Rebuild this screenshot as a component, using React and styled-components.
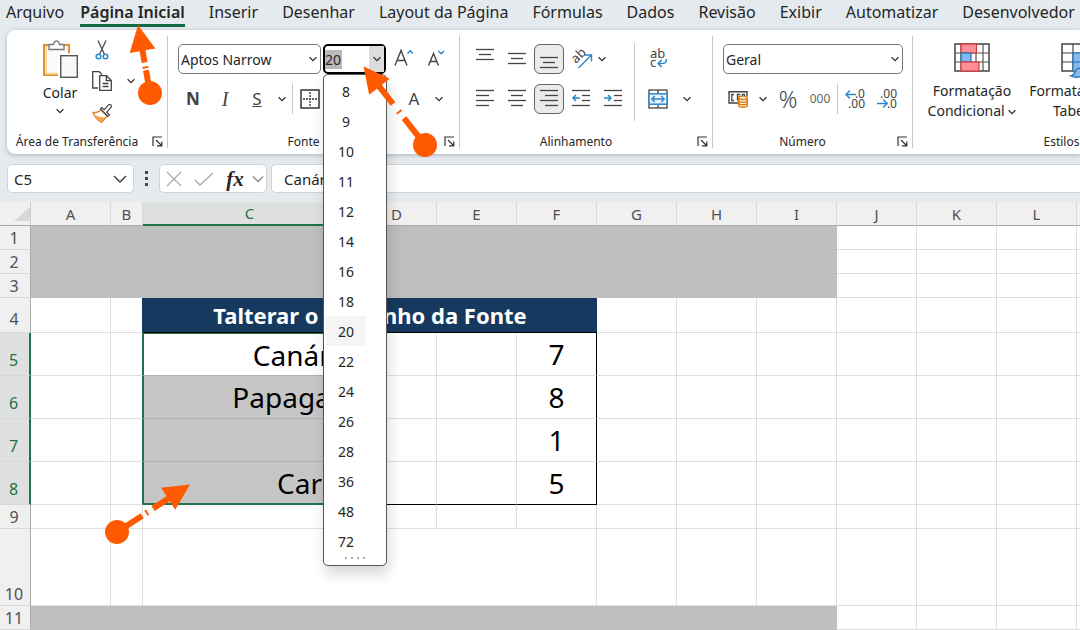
import React, { useState } from 'react';
import styled, { createGlobalStyle, css } from 'styled-components';

const tabs = [
  'Arquivo',
  'Página Inicial',
  'Inserir',
  'Desenhar',
  'Layout da Página',
  'Fórmulas',
  'Dados',
  'Revisão',
  'Exibir',
  'Automatizar',
  'Desenvolvedor',
];

const fontSizes = [8, 9, 10, 11, 12, 14, 16, 18, 20, 22, 24, 26, 28, 36, 48, 72];

const columns = [
  { name: 'A', width: 80 },
  { name: 'B', width: 32 },
  { name: 'C', width: 214 },
  { name: 'D', width: 80 },
  { name: 'E', width: 80 },
  { name: 'F', width: 80 },
  { name: 'G', width: 80 },
  { name: 'H', width: 80 },
  { name: 'I', width: 80 },
  { name: 'J', width: 80 },
  { name: 'K', width: 80 },
  { name: 'L', width: 80 },
  { name: 'M', width: 80 },
];

const animals = [
  { row: 5, name: 'Canário', amount: 7 },
  { row: 6, name: 'Papagaio', amount: 8 },
  { row: 7, name: '', amount: 1 },
  { row: 8, name: 'Carpa', amount: 5 },
];

const Chevron = ({ size = 8, color = '#333' }) => (
  <svg width={size} height={size} viewBox='0 0 8 8' fill='none' stroke={color} strokeWidth='1.3' aria-hidden='true'>
    <path d='M0.6 2.3 4 5.7 7.4 2.3' vectorEffect='non-scaling-stroke' />
  </svg>
);

const PasteIcon = () => (
  <svg width='36' height='40' viewBox='0 0 36 40' fill='none' aria-hidden='true'>
    <rect x='2' y='6' width='25' height='30' fill='#fafafa' stroke='#e2912f' strokeWidth='2' />
    <path d='M4 7v28M3 34.500h12' stroke='#fbdc9c' strokeWidth='2' />
    <path d='M7 10.500V5.500h4.500c.6-2.400 1.600-3.600 3-3.600s2.400 1.200 3 3.600H22v5z' fill='#fff' stroke='#777' strokeWidth='1.300' />
    <rect x='16' y='14.500' width='20' height='25' fill='#fff' />
    <rect x='18.700' y='16.700' width='16.600' height='21.600' fill='#f8f8f8' stroke='#555' strokeWidth='1.400' />
  </svg>
);

const CutIcon = () => (
  <svg width='14' height='20' viewBox='0 0 14 20' fill='none' aria-hidden='true'>
    <path d='M3 0.500 9.300 14M11 0.500 4.700 14' stroke='#444' strokeWidth='1.200' />
    <circle cx='3.500' cy='16.500' r='2.300' stroke='#2a88cc' strokeWidth='1.500' />
    <circle cx='10.500' cy='16.500' r='2.300' stroke='#2a88cc' strokeWidth='1.500' />
  </svg>
);

const CopyIcon = () => (
  <svg width='20' height='20' viewBox='0 0 20 20' fill='none' stroke='#444' strokeWidth='1.300' aria-hidden='true'>
    <path d='M6 17H.7V.700h6.500L10 3.500' />
    <path d='M7.700 4.700h6.800l4.800 4.800v9.800H7.700z' fill='#fff' />
    <path d='M14.300 5v4.700H19M10.500 12.500h6M10.500 15.500h6' />
  </svg>
);

const BrushIcon = () => (
  <svg width='20' height='20' viewBox='0 0 20 20' fill='none' aria-hidden='true'>
    <path d='M1 9.500c3.500.4 6-.7 8-2.500l6 6-5.500 6.300C6 17.800 3 14 1 9.500z' fill='#fff' stroke='#d98324' strokeWidth='1.400' />
    <path d='M3 12.500 13 15l-3.500 4.200C6.500 17.800 4.500 15.500 3 12.500z' fill='#f3a44b' />
    <path d='m8.500 6 7.500 7.500 1.500-1.500-2.800-2.800L19.300 4c.8-1.600-1-3.200-2.500-2.300l-4.600 5L9.800 4.500z' fill='#fff' stroke='#444' strokeWidth='1.200' />
  </svg>
);

const LauncherIcon = () => (
  <svg width='11' height='11' viewBox='0 0 11 11' fill='none' stroke='#333' strokeWidth='1.200' aria-hidden='true'>
    <path d='M1 10V1h9' />
    <path d='m4 4 5.500 5.500M9.800 5.500v4.300H5' />
  </svg>
);

const BordersIcon = () => (
  <svg width='20' height='20' viewBox='0 0 20 20' fill='none' stroke='#333' aria-hidden='true'>
    <rect x='1' y='1' width='18' height='18' strokeWidth='1.500' />
    <path d='M10 3v14M3 10h14' strokeWidth='1.300' strokeDasharray='2 1' />
  </svg>
);

const GrowIcon = ({ shrink }) => (
  <svg width='20' height='22' viewBox='0 0 20 22' fill='none' aria-hidden='true'>
    <path
      d={shrink ? 'M3.500 17.500 8.500 5.500l5 12M5.400 13.500h6.200' : 'M2 17.500 8 2.500l6 15M4.300 12.500h7.400'}
      stroke='#444'
      strokeWidth='1.400'
    />
    <path d={shrink ? 'm13.500 3 2.700 2.700L18.900 3' : 'm14.500 5.500 2.700-2.700 2.700 2.700'} stroke='#2a88cc' strokeWidth='1.500' />
  </svg>
);

// Each entry in lines is [x1, x2, y]
const LinesIcon = ({ lines, arrow }) => (
  <svg width='18' height='20' viewBox='0 0 18 20' fill='none' aria-hidden='true'>
    {lines.map(([x1, x2, y]) => (
      <path key={y} d={`M${x1} ${y}.5H${x2}`} stroke='#444' strokeWidth='1.300' />
    ))}
    {arrow && <path d={arrow} stroke='#2a88cc' strokeWidth='1.500' />}
  </svg>
);

const OrientationIcon = () => (
  <svg width='22' height='22' viewBox='0 0 22 22' fill='none' aria-hidden='true'>
    <text x='6' y='16' transform='rotate(-45 6 16)' fontFamily='Noto Sans' fontSize='13' fill='#444'>
      ab
    </text>
    <path d='M8.500 20 21 7.500M15 7h6.500v6.500' stroke='#2a88cc' strokeWidth='1.400' />
  </svg>
);

const WrapIcon = () => (
  <svg width='20' height='22' viewBox='0 0 20 22' fill='none' aria-hidden='true'>
    <text x='2' y='10' fontFamily='Noto Sans' fontSize='13' fill='#444'>
      ab
    </text>
    <text x='2' y='19' fontFamily='Noto Sans' fontSize='13' fill='#444'>
      c
    </text>
    <path d='M18.300 11c.5 3.500-1.300 4.500-4 4.500h-4M13.800 11.800l-3.700 3.700 3.700 3.700' stroke='#2a88cc' strokeWidth='1.500' />
  </svg>
);

const MergeIcon = () => (
  <svg width='20' height='20' viewBox='0 0 20 20' fill='none' aria-hidden='true'>
    <rect x='1' y='1' width='18' height='18' stroke='#444' strokeWidth='1.300' />
    <path d='M10 1v4M10 15v4' stroke='#444' strokeWidth='1.300' />
    <rect x='1' y='4.800' width='18' height='10.400' fill='#e8f3fb' stroke='#2a88cc' strokeWidth='1.500' />
    <path d='M4 10h12M6.800 7 3.800 10l3 3M13.200 7l3 3-3 3' stroke='#2a88cc' strokeWidth='1.400' />
  </svg>
);

const CurrencyIcon = () => (
  <svg width='20' height='18' viewBox='0 0 20 18' fill='none' aria-hidden='true'>
    <path d='M10 13H1V1.700h18V6' stroke='#444' strokeWidth='1.400' />
    <path d='M6 4.500H3.800v6H6M9.500 10.500v-6h3M9.500 7.500h2M14.500 6V4.500h2V6' stroke='#444' strokeWidth='1.300' />
    <path d='M10.700 8v7.500c0 2.300 8.600 2.300 8.600 0V8' fill='#fff3dc' stroke='#d9770b' strokeWidth='1.400' />
    <path d='M10.700 10.500c0 2.200 8.600 2.200 8.600 0M10.700 13c0 2.200 8.600 2.200 8.600 0' stroke='#d9770b' strokeWidth='1.400' />
    <ellipse cx='15' cy='7.800' rx='4.300' ry='1.700' fill='#fff3dc' stroke='#d9770b' strokeWidth='1.400' />
  </svg>
);

const DecimalIcon = ({ less }) => (
  <svg width='22' height='22' viewBox='0 0 22 22' fill='none' aria-hidden='true'>
    <text x='21' y='10' textAnchor='end' fontFamily='Noto Sans' fontSize='12' fill='#444'>
      {less ? '.00' : '.0'}
    </text>
    <text x='21' y='20' textAnchor='end' fontFamily='Noto Sans' fontSize='12' fill='#444'>
      {less ? '.0' : '.00'}
    </text>
    <path
      d={less ? 'M1 15.500h10M7.200 11.500l4 4-4 4' : 'M12 6.500H2M6 2.500l-4 4 4 4'}
      stroke='#2a88cc'
      strokeWidth='1.500'
    />
  </svg>
);

const ConditionalIcon = () => (
  <svg width='36' height='30' viewBox='0 0 36 30' fill='none' preserveAspectRatio='xMidYMin' aria-hidden='true'>
    <rect x='1' y='1' width='34' height='27' fill='#fff' />
    <path d='M1 10h34M1 19h34M7 1v27M22 1v27M29 1v27' stroke='#555' strokeWidth='1.200' />
    <rect x='1' y='1' width='34' height='27' stroke='#444' strokeWidth='1.500' />
    <rect x='7' y='1' width='15.500' height='9' fill='#ff8f94' stroke='#d9363e' strokeWidth='1.200' />
    <rect x='7' y='10' width='10' height='9' fill='#83b9ec' stroke='#1f6fb5' strokeWidth='1.200' />
    <rect x='7' y='19' width='18' height='9' fill='#ff8f94' stroke='#d9363e' strokeWidth='1.200' />
  </svg>
);

const FormatTableIcon = () => (
  <svg width='38' height='36' viewBox='0 0 38 36' fill='none' preserveAspectRatio='xMidYMin' aria-hidden='true'>
    <rect x='1' y='1' width='34' height='27' fill='#fff' stroke='#444' strokeWidth='1.500' />
    <path d='M1 10h34M1 19h34M12 1v27M23 1v27' stroke='#444' strokeWidth='1.200' />
    <path d='M12 10h23v18H12z' fill='#83b9ec' />
    <path d='M12 28V10h23M12 19h23M23 10v18' stroke='#1f6fb5' strokeWidth='1.200' />
    <path d='M10 33c4-.3 3-5 6-7s7 0 7 3c0 4-7 7-13 4z' fill='#83b9ec' stroke='#1f6fb5' strokeWidth='1.300' />
  </svg>
);

const alignIcons = {
  top: [[0, 18, 0], [3, 15, 5], [0, 18, 10]],
  middle: [[0, 18, 4], [3, 15, 9], [0, 18, 14]],
  bottom: [[0, 18, 8], [3, 15, 13], [0, 18, 18]],
  left: [[0, 18, 1], [0, 13, 6], [0, 18, 11], [0, 13, 16]],
  center: [[0, 18, 1], [3, 15, 6], [0, 18, 11], [3, 15, 16]],
  right: [[0, 18, 1], [5, 18, 6], [0, 18, 11], [5, 18, 16]],
  indent: [[0, 18, 1], [10, 18, 6], [10, 18, 11], [0, 18, 16]],
};

// Pointer with a round tail: gap is the distance along the shaft that stays open
const Pointer = ({ left, top, length, angle, gap }) => (
  <PointerSvg $left={left} $top={top} width='24' height='24' viewBox='-12 -12 24 24' aria-hidden='true'>
    <g transform={`rotate(${angle})`} fill='#ff5a00' stroke='#ff5a00'>
      <circle r='12' stroke='none' />
      <path d={`M8 0H${gap[0]}M${gap[1]} 0H${length - 22}`} strokeWidth='6' />
      <path d={`M${(gap[0] + gap[1]) / 2 - 1} -3v6`} strokeWidth='2' />
      <path d={`M${length} 0 ${length - 26} -13v26z`} stroke='none' />
    </g>
  </PointerSvg>
);

const Group = ({ title, width, inset = 10, launcher, children }) => (
  <GroupBox $width={width} aria-label={title}>
    <GroupBody $inset={inset}>{children}</GroupBody>
    <GroupFooter>
      <GroupTitle>{title}</GroupTitle>
      {launcher && (
        <LauncherButton aria-label={`Mais opções de ${title}`}>
          <LauncherIcon />
        </LauncherButton>
      )}
    </GroupFooter>
  </GroupBox>
);

const App = () => {
  const [activeTab, setActiveTab] = useState('Página Inicial');
  const [fontSize, setFontSize] = useState('20');
  const [isOpen, setIsOpen] = useState(true);

  const onSelectSizeHandler = (size) => {
    setFontSize(String(size));
    setIsOpen(false);
  };

  const emptyCells = (names) => names.split('').map((name) => <Cell key={name} />);

  return (
    <Page>
      <GlobalStyle />
      <TabBar>
        {tabs.map((tab) => (
          <Tab key={tab} $active={tab === activeTab} onClick={() => setActiveTab(tab)}>
            {tab}
          </Tab>
        ))}
      </TabBar>

      <Ribbon>
        <Group title='Área de Transferência' width={161} launcher>
          <PasteButton>
            <PasteIcon />
            Colar
            <Chevron />
          </PasteButton>
          <ClipboardTools>
            <ToolButton aria-label='Recortar'>
              <CutIcon />
            </ToolButton>
            <span />
            <ToolButton aria-label='Copiar'>
              <CopyIcon />
            </ToolButton>
            <ArrowButton aria-label='Opções de cópia'>
              <Chevron />
            </ArrowButton>
            <ToolButton aria-label='Pincel de Formatação'>
              <BrushIcon />
            </ToolButton>
          </ClipboardTools>
        </Group>

        <Group title='Fonte' width={292} launcher>
          <Rows>
            <Row>
              <SelectBox $width={143}>
                <select aria-label='Fonte' defaultValue='Aptos Narrow'>
                  <option>Aptos Narrow</option>
                  <option>Calibri</option>
                </select>
                <Chevron />
              </SelectBox>
              <SizeBox>
                <SizeField>
                  <input aria-label='Tamanho da Fonte' value={fontSize} onChange={(e) => setFontSize(e.target.value)} />
                </SizeField>
                <SizeToggle aria-label='Abrir tamanhos' onClick={() => setIsOpen(!isOpen)}>
                  <Chevron />
                </SizeToggle>
                {isOpen && (
                  <SizeMenu>
                    {fontSizes.map((size) => (
                      <li key={size}>
                        <SizeOption $selected={String(size) === fontSize} onClick={() => onSelectSizeHandler(size)}>
                          {size}
                        </SizeOption>
                      </li>
                    ))}
                    <Grip>
                      <i />
                      <i />
                      <i />
                      <i />
                    </Grip>
                  </SizeMenu>
                )}
              </SizeBox>
              <ToolButton aria-label='Aumentar Tamanho da Fonte'>
                <GrowIcon />
              </ToolButton>
              <ToolButton aria-label='Diminuir Tamanho da Fonte'>
                <GrowIcon shrink />
              </ToolButton>
            </Row>
            <Row $inset={12}>
              <ToolButton $weight={700}>N</ToolButton>
              <SerifButton>I</SerifButton>
              <ToolButton>
                <u>S</u>
              </ToolButton>
              <ArrowButton aria-label='Opções de sublinhado'>
                <Chevron />
              </ArrowButton>
              <Divider />
              <ToolButton aria-label='Bordas'>
                <BordersIcon />
              </ToolButton>
              <Spacer />
              <ToolButton>A</ToolButton>
              <ArrowButton aria-label='Cor da Fonte'>
                <Chevron />
              </ArrowButton>
            </Row>
          </Rows>
        </Group>

        <Group title='Alinhamento' width={253} launcher>
          <Rows>
            <Row>
              <ToolButton aria-label='Alinhar em Cima'>
                <LinesIcon lines={alignIcons.top} />
              </ToolButton>
              <ToolButton aria-label='Alinhar no Meio'>
                <LinesIcon lines={alignIcons.middle} />
              </ToolButton>
              <ToolButton $pressed aria-label='Alinhar Embaixo'>
                <LinesIcon lines={alignIcons.bottom} />
              </ToolButton>
              <ToolButton aria-label='Orientação'>
                <OrientationIcon />
              </ToolButton>
              <ArrowButton $narrow aria-label='Opções de orientação'>
                <Chevron />
              </ArrowButton>
            </Row>
            <Row>
              <ToolButton aria-label='Alinhar à Esquerda'>
                <LinesIcon lines={alignIcons.left} />
              </ToolButton>
              <ToolButton aria-label='Centralizar'>
                <LinesIcon lines={alignIcons.center} />
              </ToolButton>
              <ToolButton $pressed aria-label='Alinhar à Direita'>
                <LinesIcon lines={alignIcons.right} />
              </ToolButton>
              <ToolButton aria-label='Diminuir Recuo'>
                <LinesIcon lines={alignIcons.indent} arrow='M8 9H1M4 6 1 9l3 3' />
              </ToolButton>
              <ToolButton aria-label='Aumentar Recuo'>
                <LinesIcon lines={alignIcons.indent} arrow='M0 9h7M4 6l3 3-3 3' />
              </ToolButton>
            </Row>
          </Rows>
          <TallDivider />
          <Rows>
            <Row>
              <ToolButton aria-label='Quebrar Texto Automaticamente'>
                <WrapIcon />
              </ToolButton>
            </Row>
            <Row>
              <ToolButton aria-label='Mesclar e Centralizar'>
                <MergeIcon />
              </ToolButton>
              <ArrowButton $wide aria-label='Opções de mesclagem'>
                <Chevron />
              </ArrowButton>
            </Row>
          </Rows>
        </Group>

        <Group title='Número' width={200} launcher>
          <Rows>
            <Row>
              <SelectBox $width={180}>
                <select aria-label='Formato de Número' defaultValue='Geral'>
                  <option>Geral</option>
                  <option>Moeda</option>
                </select>
                <Chevron />
              </SelectBox>
            </Row>
            <Row>
              <ToolButton aria-label='Formato de Contabilização'>
                <CurrencyIcon />
              </ToolButton>
              <ArrowButton aria-label='Opções de moeda'>
                <Chevron />
              </ArrowButton>
              <PercentButton>%</PercentButton>
              <ThousandButton>000</ThousandButton>
              <Divider />
              <ToolButton aria-label='Aumentar Casas Decimais'>
                <DecimalIcon />
              </ToolButton>
              <ToolButton aria-label='Diminuir Casas Decimais'>
                <DecimalIcon less />
              </ToolButton>
            </Row>
          </Rows>
        </Group>

        <Group title='Estilos' width={298} inset={5}>
          <StyleButton>
            <ConditionalIcon />
            <span>Formatação</span>
            <span>
              Condicional <Chevron />
            </span>
          </StyleButton>
          <StyleButton>
            <FormatTableIcon />
            <span>Formatar como</span>
            <span>
              Tabela <Chevron />
            </span>
          </StyleButton>
        </Group>
      </Ribbon>

      <FormulaBar>
        <NameBox>
          <input aria-label='Caixa de Nome' defaultValue='C5' />
          <Chevron size={14} />
        </NameBox>
        <Dots>
          <i />
          <i />
          <i />
        </Dots>
        <FormulaTools>
          <BarButton aria-label='Cancelar'>
            <svg width='16' height='16' viewBox='0 0 16 16' fill='none' stroke='#aaa' strokeWidth='1.300'>
              <path d='m1 1 14 14M15 1 1 15' />
            </svg>
          </BarButton>
          <BarButton aria-label='Inserir'>
            <svg width='20' height='16' viewBox='0 0 20 16' fill='none' stroke='#aaa' strokeWidth='1.300'>
              <path d='m1 9 5 5L19 2' />
            </svg>
          </BarButton>
          <FxButton>fx</FxButton>
          <Chevron size={12} color='#888' />
        </FormulaTools>
        <FormulaInput aria-label='Barra de fórmulas' defaultValue='Canário' />
      </FormulaBar>

      <SheetArea>
        <Sheet>
          <colgroup>
            <SizedCol $width={31} />
            {columns.map((column) => (
              <SizedCol key={column.name} $width={column.width} />
            ))}
          </colgroup>
          <thead>
            <tr>
              <Corner>
                <svg width='16' height='14' viewBox='0 0 16 14' aria-label='Selecionar tudo'>
                  <path d='M16 0v14H0z' fill='#d8d8d8' />
                </svg>
              </Corner>
              {columns.map((column) => (
                <ColumnHead key={column.name} $selected={column.name === 'C'}>
                  {column.name}
                </ColumnHead>
              ))}
            </tr>
          </thead>
          <tbody>
            {[1, 2, 3].map((row) => (
              <SheetRow key={row} $height={24}>
                <RowHead>{row}</RowHead>
                <Cell $band colSpan={9} />
                {emptyCells('JKLM')}
              </SheetRow>
            ))}
            <SheetRow $height={35}>
              <RowHead $line={26}>4</RowHead>
              <Cell />
              <Cell $edge='#163a5f' />
              <TitleCell colSpan={4}>Talterar o Tamanho da Fonte</TitleCell>
              {emptyCells('GHIJKLM')}
            </SheetRow>
            {animals.map((animal, index) => (
              <SheetRow key={animal.row} $height={43}>
                <RowHead $selected $line={30}>
                  {animal.row}
                </RowHead>
                <Cell />
                <Cell $edge='#1f7346' />
                <SelectedCell $first={index === 0} $last={index === animals.length - 1}>
                  {animal.name}
                </SelectedCell>
                <Cell $lineBelow={index === animals.length - 1} />
                <Cell $lineBelow={index === animals.length - 1} />
                <AmountCell $lineBelow={index === animals.length - 1}>{animal.amount}</AmountCell>
                {emptyCells('GHIJKLM')}
              </SheetRow>
            ))}
            <SheetRow $height={24}>
              <RowHead>9</RowHead>
              {emptyCells('ABCDEFGHIJKLM')}
            </SheetRow>
            <SheetRow $height={77}>
              <RowHead>10</RowHead>
              {emptyCells('AB')}
              <Cell colSpan={4} />
              {emptyCells('GHIJKLM')}
            </SheetRow>
            {[11, 12].map((row) => (
              <SheetRow key={row} $height={24}>
                <RowHead>{row}</RowHead>
                <Cell $band colSpan={9} />
                {emptyCells('JKLM')}
              </SheetRow>
            ))}
          </tbody>
        </Sheet>
      </SheetArea>

      <Pointer left={138} top={81} length={69} angle={-100} gap={[23, 31]} />
      <Pointer left={413} top={133} length={100} angle={-128} gap={[34, 52]} />
      <Pointer left={105} top={520} length={87} angle={-33} gap={[30, 43]} />
    </Page>
  );
};

export default App;

const GlobalStyle = createGlobalStyle`
  * {
    box-sizing: border-box;
  }

  body {
    margin: 0;
    font-family: 'Noto Sans', 'Open Sans', sans-serif;
    font-size: 14px;
    color: #262626;
  }

  button, input, select {
    margin: 0;
    padding: 0;
    border: 0;
    background: none;
    color: inherit;
    font: inherit;
    outline: none;
  }

  svg {
    flex: none;
    overflow: visible;
  }
`;

const Page = styled.div`
  position: relative;
  display: flex;
  flex-direction: column;
  height: 100vh;
  overflow: hidden;
  background: #e5eaee;
`;

const TabBar = styled.nav`
  display: flex;
  flex: none;
  gap: 24px;
  height: 30px;
  padding-left: 6px;
`;

const Tab = styled.button`
  height: 27px;
  font-size: 16px;
  line-height: 24px;
  white-space: nowrap;
  border-bottom: 3px solid ${({ $active }) => ($active ? '#136c41' : 'transparent')};
  font-weight: ${({ $active }) => ($active ? 600 : 400)};

  &:first-child {
    margin-right: -8px;
  }
`;

const Ribbon = styled.header`
  display: flex;
  flex: none;
  height: 124px;
  margin-left: 7px;
  padding: 6px 0;
  border-radius: 8px 0 0 8px;
  background: #fff;
  box-shadow: 0 1px 4px rgba(0, 0, 0, 0.25);
`;

const GroupBox = styled.section`
  display: flex;
  flex: none;
  flex-direction: column;
  width: ${({ $width }) => $width}px;
  border-right: 1px solid #c8c8c8;
`;

const GroupBody = styled.div`
  display: flex;
  flex: 1;
  padding-left: ${({ $inset }) => $inset}px;
`;

const GroupFooter = styled.footer`
  display: flex;
  align-items: center;
  height: 14px;
  font-size: 12px;
`;

const GroupTitle = styled.span`
  flex: 1;
  text-align: center;
  white-space: nowrap;
`;

const LauncherButton = styled.button`
  display: flex;
  justify-content: center;
  width: 20px;
`;

const PasteButton = styled.button`
  display: flex;
  flex: none;
  flex-direction: column;
  align-items: center;
  gap: 4px;
  width: 68px;
  padding: 3px 0 0 18px;
  line-height: 20px;
`;

const ClipboardTools = styled.div`
  display: grid;
  grid-template-columns: 34px 24px;
  grid-template-rows: 28px 34px 30px;
  place-items: center;
`;

const Rows = styled.div`
  display: flex;
  flex: 1;
  flex-direction: column;
  gap: 10px;
  padding-top: 8px;
`;

const Row = styled.div`
  display: flex;
  align-items: center;
  gap: 2px;
  height: 30px;
  padding-right: ${({ $inset }) => $inset || 0}px;
`;

const ToolButton = styled.button`
  display: flex;
  flex: none;
  align-items: center;
  justify-content: center;
  width: 30px;
  height: 30px;
  font-size: 17px;
  line-height: 26px;
  font-weight: ${({ $weight }) => $weight || 400};
  color: #444;

  ${({ $pressed }) =>
    $pressed &&
    css`
      border: 1px solid #666;
      border-radius: 6px;
      background: #ebebeb;
    `}
`;

const SerifButton = styled(ToolButton)`
  font-family: 'Liberation Serif', serif;
  font-size: 20px;
  font-style: italic;
`;

const PercentButton = styled(ToolButton)`
  font-size: 23px;
  font-weight: 300;
`;

const ThousandButton = styled(ToolButton)`
  font-size: 12px;
  color: #666;
`;

const ArrowButton = styled.button`
  display: flex;
  align-items: center;
  justify-content: center;
  width: ${({ $narrow, $wide }) => ($narrow ? 8 : $wide ? 24 : 16)}px;
  height: 30px;
`;

const Divider = styled.span`
  width: 1px;
  height: 30px;
  background: #c8c8c8;
`;

const TallDivider = styled.span`
  width: 1px;
  height: 78px;
  margin: 7px 8px 0 6px;
  background: #c8c8c8;
`;

const Spacer = styled.span`
  flex: 1;
`;

const SelectBox = styled.label`
  display: flex;
  align-items: center;
  width: ${({ $width }) => $width}px;
  height: 30px;
  padding: 0 3px 0 2px;
  border: 1px solid #777;
  border-radius: 5px;
  background: #fff;

  select {
    flex: 1;
    min-width: 0;
    appearance: none;
  }
`;

const SizeBox = styled.div`
  position: relative;
  display: flex;
  width: 63px;
  height: 30px;
  border: 2px solid #000;
  border-radius: 5px;
`;

const SizeField = styled.div`
  display: flex;
  flex: 1;
  align-items: center;

  input {
    width: 17px;
    background: #b9b9b9;
  }
`;

const SizeToggle = styled.button`
  display: flex;
  align-items: center;
  justify-content: center;
  width: 15px;
  background: #dcdcdc;
`;

const SizeMenu = styled.ul`
  position: absolute;
  z-index: 2;
  top: 28px;
  left: -2px;
  width: 64px;
  margin: 0;
  padding: 1px 2px 0;
  border: 1px solid #555;
  border-radius: 5px;
  background: #fff;
  box-shadow: 2px 8px 14px rgba(0, 0, 0, 0.16);
  list-style: none;
`;

const SizeOption = styled.button`
  display: block;
  width: 40px;
  height: 30px;
  background: ${({ $selected }) => ($selected ? '#f5f5f5' : 'none')};
`;

const Grip = styled.li`
  display: flex;
  justify-content: center;
  gap: 4px;
  height: 9px;
  padding-top: 1px;

  i {
    width: 2px;
    height: 2px;
    background: #aaa;
  }
`;

const StyleButton = styled.button`
  display: flex;
  flex: none;
  flex-direction: column;
  align-items: center;
  width: 108px;
  padding-top: 7px;
  white-space: nowrap;
  line-height: 20px;

  svg {
    height: 38px;
  }

  span svg {
    height: 8px;
  }
`;

const FormulaBar = styled.div`
  display: flex;
  flex: none;
  height: 48px;
  padding: 10px 0 9px 7px;
  font-size: 15px;
`;

const BarBox = styled.div`
  display: flex;
  align-items: center;
  border: 1px solid #d0d4d7;
  border-radius: 5px;
  background: #fff;
`;

const NameBox = styled(BarBox)`
  width: 127px;
  padding: 0 6px;

  input {
    flex: 1;
    min-width: 0;
  }
`;

const Dots = styled.div`
  display: flex;
  flex-direction: column;
  align-items: center;
  justify-content: center;
  gap: 3px;
  width: 25px;

  i {
    width: 3px;
    height: 3px;
    background: #444;
  }
`;

const FormulaTools = styled(BarBox)`
  gap: 2px;
  width: 108px;
`;

const BarButton = styled.button`
  display: flex;
  justify-content: center;
  width: 28px;
`;

const FxButton = styled(BarButton)`
  width: 30px;
  font-family: 'Liberation Serif', serif;
  font-size: 21px;
  font-style: italic;
  font-weight: 700;
  line-height: 24px;
`;

const FormulaInput = styled.input`
  flex: 1;
  min-width: 0;
  margin-left: 4px;
  padding-left: 12px;
  border: 1px solid #d0d4d7;
  border-right: 0;
  border-radius: 5px 0 0 5px;
  background: #fff;
`;

const SheetArea = styled.main`
  flex: 1;
  min-height: 0;
  overflow: hidden;
  background: #fff;
`;

const Sheet = styled.table`
  width: 0;
  table-layout: fixed;
  border-collapse: separate;
  border-spacing: 0;

  td, th {
    padding: 0;
  }
`;

const SizedCol = styled.col`
  width: ${({ $width }) => $width}px;
`;

const SheetRow = styled.tr`
  height: ${({ $height }) => $height}px;
`;

const Corner = styled.th`
  height: 24px;
  background: #f0f0f0;
  border-right: 1px solid #ccc;
  border-bottom: 1px solid #a8a8a8;
  text-align: right;
  line-height: 0;
`;

const ColumnHead = styled.th`
  height: 24px;
  font-size: 15px;
  font-weight: 400;
  line-height: 22px;
  color: ${({ $selected }) => ($selected ? '#1f7346' : '#505050')};
  background: ${({ $selected }) => ($selected ? '#dfe1e0' : '#f0f0f0')};
  border-right: 1px solid #d8d8d8;
  border-bottom: ${({ $selected }) => ($selected ? '2px solid #1f7346' : '1px solid #a8a8a8')};
`;

const RowHead = styled.th`
  height: inherit;
  font-size: 16px;
  font-weight: 400;
  line-height: ${({ $line }) => $line || 22}px;
  vertical-align: bottom;
  color: ${({ $selected }) => ($selected ? '#1f7346' : '#505050')};
  background: ${({ $selected }) => ($selected ? '#dfe1e0' : '#f0f0f0')};
  border-right: ${({ $selected }) => ($selected ? '2px solid #1f7346' : '1px solid #aaa')};
  border-bottom: 1px solid #d8d8d8;

  && {
    padding-right: 2px;
  }
`;

const Cell = styled.td`
  border-right: 1px solid ${({ $edge }) => $edge || '#dedede'};
  border-bottom: 1px solid ${({ $lineBelow }) => ($lineBelow ? '#000' : '#dedede')};

  ${({ $band }) =>
    $band &&
    css`
      border-color: #bfbfbf;
      background: #bfbfbf;
    `}
`;

const TitleCell = styled.td`
  border-bottom: 1px solid #000;
  background: #163a5f;
  color: #fff;
  font-size: 22px;
  font-weight: 700;
  line-height: 32px;
  text-align: center;
  white-space: nowrap;
`;

const SelectedCell = styled(Cell)`
  color: #000;
  font-size: 28px;
  line-height: 38px;
  text-align: right;
  background: ${({ $first }) => ($first ? '#fff' : '#c6c6c6')};
  border-top: ${({ $first }) => ($first ? '1px solid #1f7346' : '0')};
  border-left: 1px solid #1f7346;
  border-right: 2px solid #1f7346;
  border-bottom: ${({ $last }) => ($last ? '2px solid #1f7346' : '1px solid #b0b0b0')};
`;

const AmountCell = styled(Cell)`
  border-right-color: #000;
  color: #000;
  font-size: 28px;
  line-height: 38px;
  text-align: center;
`;

const PointerSvg = styled.svg`
  position: absolute;
  z-index: 3;
  left: ${({ $left }) => $left}px;
  top: ${({ $top }) => $top}px;
  overflow: visible;
  pointer-events: none;
`;
